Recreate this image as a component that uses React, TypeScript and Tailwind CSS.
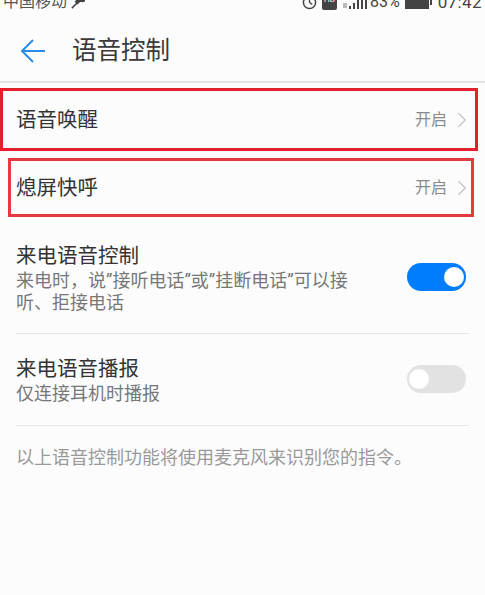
import { ChevronRight } from "lucide-react";

const font = { fontFamily: 'Roboto, "Noto Sans CJK SC", sans-serif' };

function StatusBar() {
  return (
    <div className="flex h-[10px] items-end justify-between overflow-hidden pl-[3px] pr-[3px] text-[16px] leading-[18px] text-[#3a3a3a]">
      <div className="mb-[-1px] flex items-center gap-[3px]">
        <span className="text-[#555]">中国移动</span>
        <svg viewBox="0 0 16 16" className="h-[15px] w-[15px]" aria-hidden="true">
          <path d="M2 14 8 8M9 3a4 4 0 1 1 4 4l-2-1-3 3-2-2 3-3Z" fill="#444" stroke="#444" strokeWidth="1.6" />
        </svg>
      </div>
      <div className="mb-[-1px] flex items-center text-[#444]">
        <svg viewBox="0 0 16 16" className="h-[15px] w-[15px]" aria-hidden="true">
          <circle cx="8" cy="8" r="6.5" fill="none" stroke="#444" strokeWidth="1.6" />
          <path d="M8 4v4l3 2" fill="none" stroke="#444" strokeWidth="1.4" />
        </svg>
        <span className="ml-[5px] flex h-[15px] w-[15px] items-start justify-center rounded-[2px] bg-[#444] text-[8px] leading-[9px] text-white">HD</span>
        <svg viewBox="0 0 24 14" className="ml-[6px] h-[14px] w-[24px]" aria-hidden="true">
          <path d="M6 11h2v3H6zM10 8h2v6h-2zM14 5h2v9h-2zM18 2h2v12h-2zM22 0h2v14h-2z" fill="#444" />
          <path d="M0 8h4v5H0z" fill="#bbb" />
        </svg>
        <span className="ml-[3px] text-[16px]">83%</span>
        <span className="ml-[5px] flex items-center">
          <span className="h-[14px] w-[24px] border border-[#444] bg-[#444]" />
          <span className="ml-[1px] h-[6px] w-[2px] bg-[#444]" />
        </span>
        <span className="ml-[6px] text-[17px] tracking-[0.4px]">07:42</span>
      </div>
    </div>
  );
}

function LinkRow({ title, className }: { title: string; className: string }) {
  return (
    <div className={`flex items-center justify-between pl-[16px] pr-[10px] pt-[1px] ${className}`}>
      <span className="text-[20.5px] leading-[28px] text-[#333]">{title}</span>
      <span className="flex items-center gap-[2px] text-[16px] text-[#8a8a8a]">
        开启
        <ChevronRight className="h-[26px] w-[26px] text-[#c4c4c4]" strokeWidth={1.1} aria-hidden="true" />
      </span>
    </div>
  );
}

function Toggle({ on }: { on: boolean }) {
  return (
    <span
      className={`flex h-[28px] w-[59px] flex-none items-center rounded-full px-[2px] ${
        on ? "justify-end bg-[#007dff]" : "justify-start bg-[#e2e2e2]"
      }`}
    >
      <span className="h-[20px] w-[20px] rounded-full bg-white" />
    </span>
  );
}

export default function App() {
  return (
    <div className="relative h-[595px] w-[485px] overflow-hidden bg-[#fcfcfc]" style={font}>
      <StatusBar />
      <header className="flex h-[73px] items-center gap-[25px] border-b-2 border-[#e4e4e4] pl-[19px] pt-[11px]">
        <svg viewBox="0 0 26 26" className="h-[26px] w-[28px]" aria-hidden="true">
          <path d="M25 13H2M13 2 2 13l11 11" fill="none" stroke="#2a8ceb" strokeWidth="2" />
        </svg>
        <h1 className="text-[24.5px] font-normal leading-[32px] text-[#3a3a3a]">语音控制</h1>
      </header>

      <div className="pt-[5px]">
        <LinkRow title="语音唤醒" className="h-[62px]" />
        <LinkRow title="熄屏快呼" className="mt-[6px] h-[62px]" />

        <div className="mt-[24px] flex items-start justify-between px-[16px]">
          <div className="w-[340px]">
            <p className="text-[20.5px] leading-[28px] text-[#333]">来电语音控制</p>
            <p className="text-[18px] leading-[22px] text-[#777]">
              来电时，说”接听电话”或”挂断电话”可以接听、拒接电话
            </p>
          </div>
          <span className="mt-[21px] mr-[3px]">
            <Toggle on />
          </span>
        </div>
        <div className="mx-[16px] mt-[19px] h-px bg-[#e8e8e8]" />

        <div className="mt-[21px] flex items-start justify-between px-[16px]">
          <div>
            <p className="text-[20.5px] leading-[28px] text-[#333]">来电语音播报</p>
            <p className="text-[18px] leading-[22px] text-[#777]">仅连接耳机时播报</p>
          </div>
          <span className="mt-[10px] mr-[3px]">
            <Toggle on={false} />
          </span>
        </div>
        <div className="mx-[16px] mt-[20px] h-px bg-[#e8e8e8]" />

        <p className="mt-[21px] px-[16px] text-[18px] leading-[22px] text-[#999]">
          以上语音控制功能将使用麦克风来识别您的指令。
        </p>
      </div>

      {/* red annotation boxes drawn over the screenshot */}
      <div className="absolute left-0 top-[88px] h-[63px] w-[478px] border-[3px] border-[#e5202e]" />
      <div className="absolute left-[8px] top-[158px] h-[59px] w-[466px] border-[3px] border-[#e23c40]" />
    </div>
  );
}
